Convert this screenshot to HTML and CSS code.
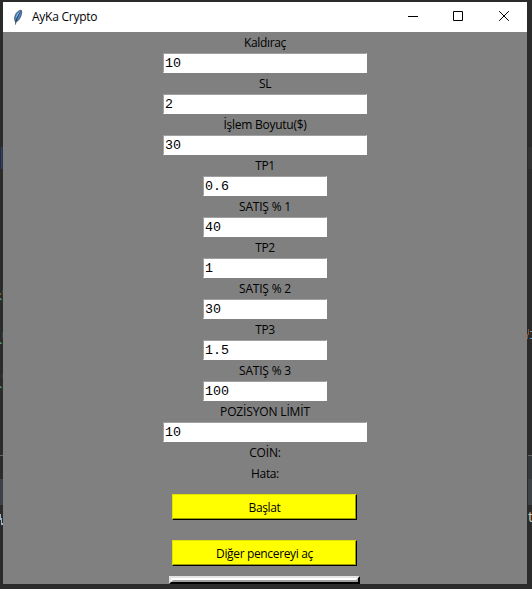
FILE: index.html
```html
<!DOCTYPE html>
<html lang="tr">
<head>
<meta charset="utf-8">
<title>AyKa Crypto</title>
<link rel="stylesheet" href="styles.css">
</head>
<body>
<svg class="backdrop" width="532" height="589" viewBox="0 0 532 589" shape-rendering="crispEdges">
  <path fill="#2e436e" d="M1 147h1v22h-1z"/>
  <path fill="#243653" d="M2 147h1v22h-1z"/>
  <path fill="#323232" d="M528 147h4v22h-4z"/>
  <path fill="#4f8a58" d="M0 298h1v1h1v1h-2zM0 342h1v1h1v1h-2zM0 386h1v1h1v1h-2z"/>
  <path fill="#294a39" d="M2 290h1v4h-1zM2 332h1v6h-1zM2 375h1v2h-1z"/>
  <path fill="#8a5428" d="M0 293h1v2h-1zM528 329h1v6h-1zM527 334h1v5h-1z"/>
  <path fill="#6897bb" d="M530 331h2v1h-2zM530 338h2v1h-2z"/>
  <path fill="#616365" d="M0 455h3v1h-3zM528 455h4v1h-4z"/>
  <path fill="#35383a" d="M528 456h4v23h-4z"/>
  <path fill="#3d4246" d="M0 479h3v26h-3zM528 479h4v26h-4z"/>
  <path fill="#9cb5c4" d="M0 514h1v4h1v5h1v2h-2v-5h-1z"/>
  <text class="backdrop-text" x="528" y="522">t</text>
</svg>
<main class="window">
  <header class="titlebar">
    <svg class="feather" width="10" height="16" viewBox="0 0 10 16">
      <path d="M2.500 13C1 10 1.500 7 3.300 4.300 5 2 7.500.7 8.500 1.500 9.200 3.500 8 8.500 5.500 11.200L3.700 12.500z" fill="#4b86cc" stroke="#3c4a5c" stroke-width=".8"/>
      <path d="M3 9.500C3 7 5 3.200 7.800 2 6.500 5 4.500 8 3 9.500z" fill="#9cc8f4"/>
      <path d="M2.500 15.500C2.700 11.500 4.500 7 7.500 2.500" fill="none" stroke="#182230" stroke-width=".8"/>
    </svg>
    <h1 class="title">AyKa Crypto</h1>
    <div class="controls">
      <svg width="45" height="30" viewBox="0 0 45 30" stroke="#000" fill="none"><path d="M16 14.500h10"/></svg>
      <svg width="45" height="30" viewBox="0 0 45 30" stroke="#000" fill="none"><path d="M16.500 9.500h9v9h-9z"/></svg>
      <svg width="45" height="30" viewBox="0 0 45 30" stroke="#000" fill="none"><path d="M17.200 11.200l9.600 9.600M26.800 11.200l-9.600 9.600" transform="translate(0 -2)"/></svg>
    </div>
  </header>
  <section class="form">
    <label class="label" for="kaldirac">Kaldıraç</label>
    <input class="entry" id="kaldirac" value="10">
    <label class="label" for="sl">SL</label>
    <input class="entry" id="sl" value="2">
    <label class="label size" for="boyut">İşlem Boyutu($)</label>
    <input class="entry" id="boyut" value="30">
    <label class="label" for="tp1">TP1</label>
    <input class="entry narrow" id="tp1" value="0.6">
    <label class="label sale" for="satis1">SATIŞ % 1</label>
    <input class="entry narrow" id="satis1" value="40">
    <label class="label" for="tp2">TP2</label>
    <input class="entry narrow" id="tp2" value="1">
    <label class="label sale" for="satis2">SATIŞ % 2</label>
    <input class="entry narrow" id="satis2" value="30">
    <label class="label" for="tp3">TP3</label>
    <input class="entry narrow" id="tp3" value="1.5">
    <label class="label sale" for="satis3">SATIŞ % 3</label>
    <input class="entry narrow" id="satis3" value="100">
    <label class="label limit" for="limit">POZİSYON LİMİT</label>
    <input class="entry" id="limit" value="10">
    <div class="label limit">COİN:</div>
    <div class="label">Hata:</div>
    <button class="action">Başlat</button>
    <button class="action">Diğer pencereyi aç</button>
    <div class="list-edge"><div class="list-inner"></div></div>
  </section>
</main>
</body>
</html>
```
FILE: styles.css
```css
* { box-sizing: border-box; }
body {
  margin: 0;
  width: 532px;
  height: 589px;
  padding: 2px 5px 5px 3px;
  overflow: hidden;
  background: #2b2b2b;
  color: #000;
  font-family: "Open Sans", "Noto Sans", sans-serif;
  font-size: 12px;
}
.backdrop { position: absolute; left: 0; top: 0; }
.backdrop-text { fill: #c9c4a8; font: 14px "Noto Sans", sans-serif; }
.window {
  position: relative;
  display: flex;
  flex-direction: column;
  width: 524px;
  height: 582px;
  overflow: hidden;
  background: #808080;
}
.titlebar {
  display: flex;
  align-items: center;
  flex: 0 0 30px;
  padding-left: 10px;
  background: #fff;
}
.feather { margin-right: 9px; }
.title {
  margin: 0;
  font-size: 12px;
  font-weight: 400;
  line-height: 30px;
  letter-spacing: -0.25px;
}
.controls { display: flex; margin-left: auto; }
.form { display: flex; flex-direction: column; align-items: center; }
.label {
  flex: 0 0 21px;
  line-height: 21px;
  letter-spacing: -0.35px;
  white-space: pre;
}
.size { letter-spacing: -0.25px; }
.sale { letter-spacing: -0.2px; }
.limit { letter-spacing: -0.15px; }
.entry {
  flex: 0 0 20px;
  width: 204px;
  height: 20px;
  margin: 0;
  padding: 1px 0 0 1px;
  border: 1px solid #fff;
  border-top-color: #a0a0a0;
  border-left-color: #a0a0a0;
  border-radius: 0;
  outline: 0;
  background: #fff;
  color: #000;
  font: 13.333px "Liberation Mono", monospace;
}
.narrow { width: 124px; }
.action {
  flex: 0 0 26px;
  width: 185px;
  margin: 10px 1px 10px 0;
  padding: 0;
  border: 1px solid #000;
  border-top-color: #e3e300;
  border-left-color: #e3e300;
  border-radius: 0;
  background: #ff0;
  box-shadow: inset -1px -1px #9c9c00;
  color: #000;
  font: 12px "Open Sans", "Noto Sans", sans-serif;
  letter-spacing: -0.35px;
}
.list-edge {
  flex: 0 0 8px;
  width: 191px;
  margin-right: 1px;
  border: 2px solid #000;
  border-top-color: #e3e3e3;
  border-left-color: #e3e3e3;
}
.list-inner {
  height: 4px;
  border: 2px solid #a0a0a0;
  border-top-color: #fff;
  border-left-color: #fff;
}
```
